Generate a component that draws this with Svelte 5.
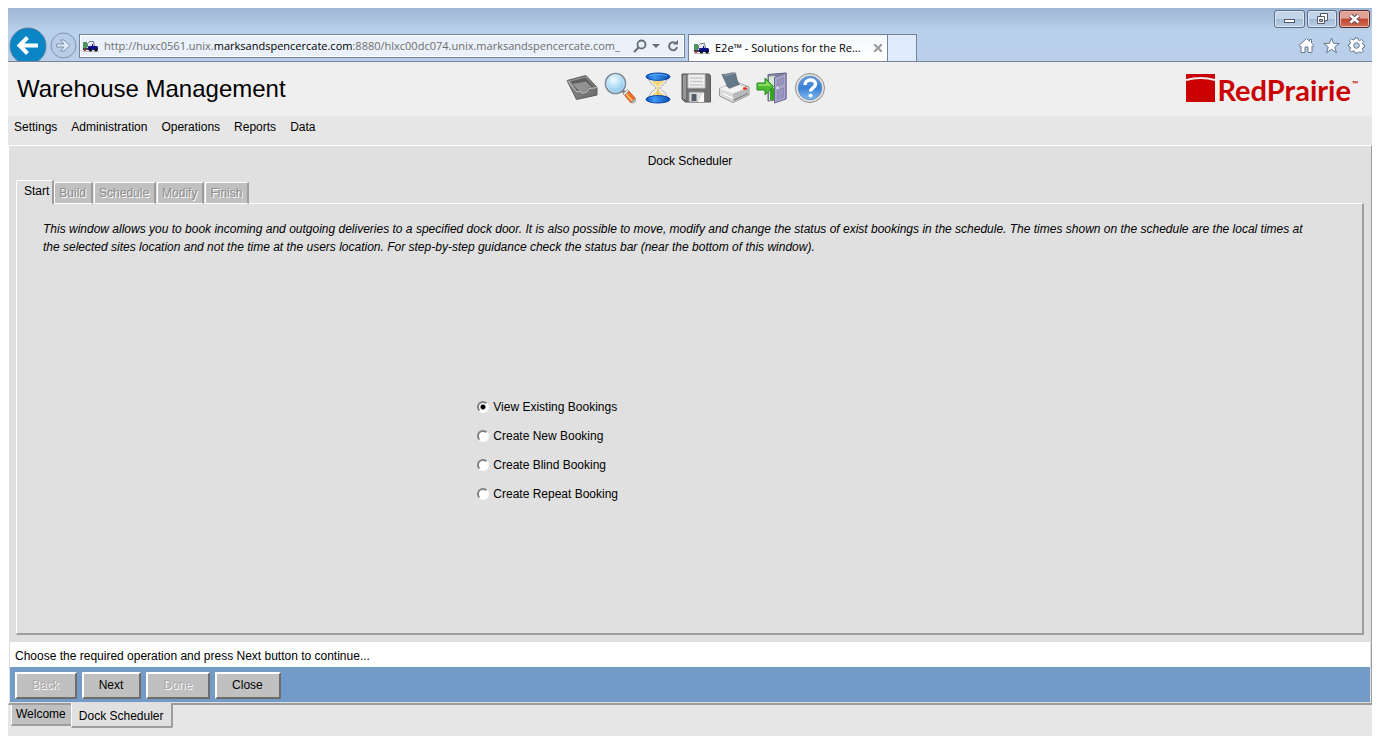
<script>
  const menus = ['Settings', 'Administration', 'Operations', 'Reports', 'Data'];
  const steps = ['Start', 'Build', 'Schedule', 'Modify', 'Finish'];
  const operations = [
    'View Existing Bookings',
    'Create New Booking',
    'Create Blind Booking',
    'Create Repeat Booking'
  ];
  let selected = $state('View Existing Bookings');
</script>

{#snippet truck()}
  <svg class="truck" viewBox="0 0 16 12" width="16" height="12" aria-hidden="true">
    <path d="M0 2h4v6H0z" fill="#4f9560" />
    <path d="M0 8h7v2H0z" fill="#3c3c50" />
    <path d="M0 11h16v1H0z" fill="#b9b9b9" />
    <path d="M4.500 7V3.500l2-2h4l1 4.500z" fill="#e8ecf4" stroke="#77778a" />
    <path d="M5 7l1-1h3V4h1v2h4l1 1v3H5z" fill="#10108a" />
    <circle cx="7.500" cy="10" r="1.600" fill="#111" />
    <circle cx="13" cy="10" r="1.600" fill="#111" />
    <path d="M1 9h2v2H1z" fill="#b03a3a" />
  </svg>
{/snippet}

<div class="window">
  <header class="chrome">
    <div class="nav">
      <button class="back" aria-label="Back">
        <svg viewBox="0 0 38 34" width="38" height="34">
          <circle cx="19" cy="19" r="18" fill="#0a86c6" stroke="#53819f" />
          <path d="M29 18.500H11M18.500 10.500l-8 8 8 8" fill="none" stroke="#fff" stroke-width="4" />
        </svg>
      </button>
      <button class="fwd" aria-label="Forward">
        <svg viewBox="0 0 27 27" width="27" height="27">
          <circle cx="13.500" cy="13.500" r="12.500" fill="#b7cce6" stroke="#7f93ac" />
          <path d="M6.500 12h7.500l-3.500-4h3.500l6 5.500-6 5.500h-3.500l3.500-4H6.500z" fill="#dce8f6" stroke="#8194ac" />
        </svg>
      </button>
    </div>
    <div class="address">
      {@render truck()}
      <a class="url" href="#top">http://huxc0561.unix.<b>marksandspencercate.com</b>:8880/hlxc00dc074.unix.marksandspencercate.com_</a>
      <button aria-label="Search">
        <svg viewBox="0 0 14 14" width="14" height="14"><circle cx="8.500" cy="5.500" r="4" fill="none" stroke="#666f78" stroke-width="1.800" /><path d="M5.500 8.500L1 13" stroke="#666f78" stroke-width="2" /></svg>
      </button>
      <button aria-label="Show address list">
        <svg viewBox="0 0 8 14" width="8" height="14"><path d="M0 5h8L4 9z" fill="#666f78" /></svg>
      </button>
      <button class="refresh" aria-label="Refresh">
        <svg viewBox="0 0 12 14" width="12" height="14"><path d="M9 4.500A4 4 0 1 0 10 8" fill="none" stroke="#666f78" stroke-width="2" /><path d="M6 5.500h5V1z" fill="#666f78" /></svg>
      </button>
    </div>
    <div class="browser-tab">
      {@render truck()}
      <span>E2e™ - Solutions for the Re...</span>
      <button aria-label="Close tab">
        <svg viewBox="0 0 8 8" width="8" height="8"><path d="M0 0l8 8M8 0L0 8" stroke="#999" stroke-width="2" /></svg>
      </button>
    </div>
    <button class="new-tab" aria-label="New tab"></button>
    <div class="right">
      <div class="sys">
        <button aria-label="Minimize">
          <svg viewBox="0 0 29 16" width="29" height="16"><rect x="9.500" y="8.500" width="10" height="3" fill="#fff" stroke="#535666" /></svg>
        </button>
        <button aria-label="Restore">
          <svg viewBox="0 0 28 16" width="28" height="16" fill="#fff" stroke="#535666"><path d="M12.500 2.500h7v7h-7z" /><path d="M9.500 5.500h7v7h-7z" /><path d="M11.500 8.500h3v2h-3z" fill="#a9bfd8" /></svg>
        </button>
        <button class="shut" aria-label="Close">
          <svg viewBox="0 0 29 16" width="29" height="16"><path d="M10.500 4.500l8 7M18.500 4.500l-8 7" stroke="#5f4652" stroke-width="4.500" /><path d="M10.500 4.500l8 7M18.500 4.500l-8 7" stroke="#fff" stroke-width="2.600" /></svg>
        </button>
      </div>
      <div class="tools">
        <button aria-label="Home">
          <svg viewBox="0 0 17 17" width="17" height="17"><path d="M8.500 1.500L1 8.500l1.200 1.200L3 9v6.500h4V10h3v5.500h4V9l.8.700L16 8.500l-2.500-2.400V2.500h-2v1.700z" fill="#fff" stroke="#66778e" /></svg>
        </button>
        <button aria-label="Favorites">
          <svg viewBox="0 0 17 17" width="17" height="17"><path d="M8.500 1l2 5.300 5.800.2-4.600 3.500 1.700 5.700-4.900-3.400-4.900 3.400L5.300 10 .7 6.500l5.800-.2z" fill="#fff" stroke="#66778e" /></svg>
        </button>
        <button aria-label="Tools">
          <svg viewBox="0 0 17 17" width="17" height="17">
            <path d="M7 1h3l.4 2 1.300.6 1.800-1.200 2.100 2.100-1.200 1.800.6 1.200 1.500.4v2.400l-1.700.5-.5 1.300 1.200 1.800-2.100 2.100-1.700-1.200-1.300.6L10 16H7l-.4-1.600-1.300-.6L3.500 15l-2.100-2.100 1.200-1.800-.6-1.300L.5 9.500V7.500l1.600-.6.5-1.200-1.200-1.800 2.100-2.100 1.800 1.200 1.300-.5z" fill="#fff" stroke="#66778e" />
            <circle cx="8.500" cy="8.500" r="2.800" fill="#bad0ea" stroke="#66778e" />
          </svg>
        </button>
      </div>
    </div>
  </header>

  <div class="banner">
    <h1>Warehouse Management</h1>
    <div class="toolbar">
      <button aria-label="Inbox">
        <svg viewBox="0 0 32 32" width="32" height="32">
          <defs><linearGradient id="tray" x2="1" y2="1"><stop stop-color="#999" /><stop offset="1" stop-color="#666" /></linearGradient></defs>
          <path d="M1 8.500L20 3.500l11 12v7.500L10.500 27.500z" fill="url(#tray)" stroke="#5c5c5c" />
          <path d="M4.500 9.500L19.500 5.700 27.500 15l-1.800 1-4-.2-2 3.500-4.500 1.200-2.500-1.800-1.500.5z" fill="#5e5e5e" />
          <path d="M6 12l14-2.500 6 6-4 .3-2 3.500-4.500 1.200-2.800-1.900z" fill="#929292" />
          <path d="M1.500 8.700L11 20l3.500-.7 1.500 2 5-1.300 1.800-3.500 8-.8" fill="none" stroke="#c4c4c4" />
        </svg>
      </button>
      <button aria-label="Search records">
        <svg viewBox="0 0 32 32" width="32" height="32">
          <defs><radialGradient id="lens" cx=".4" cy=".3" r=".8"><stop stop-color="#eefaff" /><stop offset=".6" stop-color="#a5d8f4" /><stop offset="1" stop-color="#6db3e2" /></radialGradient></defs>
          <path d="M18 18l4 4" stroke="#777" stroke-width="3" />
          <path d="M19.500 22l4.500-4 7.500 8.500-4.500 4.500z" fill="#ef6b22" stroke="#b64b19" stroke-width=".7" />
          <path d="M21.700 21.700l7 7.500" stroke="#ffc06a" stroke-width="1.800" />
          <path d="M19 21.500l4.500-4 1.500 1.500-4.500 4.500z" fill="#ddd" stroke="#888" stroke-width=".6" />
          <path d="M27 30.500l4-4 .7 2.500-2.200 2.200z" fill="#bbb" stroke="#777" stroke-width=".5" />
          <circle cx="11.500" cy="11.500" r="10" fill="url(#lens)" stroke="#7c8c99" stroke-width="1.600" />
          <circle cx="11.500" cy="11.500" r="8.800" fill="none" stroke="#d5e9f5" stroke-width=".8" />
        </svg>
      </button>
      <button aria-label="Wait">
        <svg viewBox="0 0 32 32" width="32" height="32">
          <defs><linearGradient id="cap"><stop stop-color="#0b57c4" /><stop offset=".35" stop-color="#3d9af5" /><stop offset="1" stop-color="#0b48ad" /></linearGradient></defs>
          <path d="M7 6c0 6 6 7.500 7 10-1 2.500-7 4-7 10h18c0-6-6-7.500-7-10 1-2.500 7-4 7-10z" fill="#f1f0e8" stroke="#aaa" />
          <path d="M10 9c2 3.500 5 4 6 7 1-3 4-3.500 6-7zM16 17c-1 4-6 4-7 9h14c-1-5-6-5-7-9z" fill="#f6d77c" />
          <path d="M16 15v8" stroke="#dcae3d" />
          <ellipse cx="16" cy="27.300" rx="12" ry="3.700" fill="url(#cap)" stroke="#0a48a8" />
          <ellipse cx="16" cy="4.700" rx="12" ry="3.700" fill="url(#cap)" stroke="#0a48a8" />
          <path d="M7 4c5-2 13-2 18 0" fill="none" stroke="#5cacf8" />
        </svg>
      </button>
      <button aria-label="Save">
        <svg viewBox="0 0 32 32" width="32" height="32">
          <path d="M2 2h27l1.500 1.500V30H5l-3-3z" fill="#707070" stroke="#585858" />
          <path d="M3 3h3v24H3z" fill="#999" />
          <path d="M8 2.500h17V16H8z" fill="#f0f0f0" stroke="#bbb" />
          <path d="M10 6h13M10 9.500h13M10 13h13" stroke="#c8c8c8" stroke-width="1.500" />
          <path d="M9 20h15v10H9z" fill="#dedede" stroke="#8c8c8c" />
          <path d="M11.500 22h5v7h-5z" fill="#4f5c68" />
          <path d="M18 30l5-9h1v9z" fill="#f8f8f8" />
        </svg>
      </button>
      <button aria-label="Print">
        <svg viewBox="0 0 32 32" width="32" height="32">
          <path d="M7 14L19 10l12 5-13 7z" fill="#f5f5f5" stroke="#aaa" />
          <path d="M4 2.500C9 3 13 0 17.500 1c1 5 2 9 4 12l-11 3.500C8 12 6.500 7 4 2.500z" fill="#65788a" stroke="#50606e" stroke-width=".7" />
          <path d="M6 3.500c4 0 7-2 11-2" stroke="#90a2b1" fill="none" />
          <path d="M1.500 16.500L8 14l3 3 10-3.500L31 15v8L15 30.500 1.500 24z" fill="#dcdcdc" stroke="#999" />
          <path d="M1.500 16.500L8 14l3.500 3L21 13l9.500 2.500L15 21.500z" fill="#f4f4f4" />
          <path d="M15 21.500V30l15.500-7v-7.500z" fill="#b9b9b9" />
          <path d="M3 22l11 5 3-1-12-5.500z" fill="#fff" stroke="#bbb" stroke-width=".5" />
          <ellipse cx="27" cy="16.500" rx="2.200" ry="1.300" fill="#e62b20" />
          <path d="M16 28l14-6.500" stroke="#777" />
        </svg>
      </button>
      <button aria-label="Exit">
        <svg viewBox="0 0 32 32" width="32" height="32">
          <path d="M12 2.500L30 1v26l-18 2z" fill="#8a88a8" stroke="#63617f" />
          <path d="M13 4.500l6-.5v24l-6 .5z" fill="#d9e8d6" />
          <path d="M14 14l5 3v10.500l-5 1z" fill="#35a51f" />
          <path d="M18.500 5.500L30 1v26l-11.500 4z" fill="#a6a4cb" stroke="#6a6890" />
          <path d="M21.500 8l6-2.500v6l-6 2zM21.500 18l6-2v9l-6 2.300z" fill="#9896c0" stroke="#817faa" stroke-width=".6" />
          <circle cx="21.500" cy="16" r="1.200" fill="#eee" />
          <path d="M1 11h8V6l8.500 8.500L9 23v-5H1z" fill="#4fbb35" stroke="#258a1f" />
          <path d="M2 12h8V8.500l5.500 5.500H2z" fill="#86dc62" />
        </svg>
      </button>
      <button aria-label="Help">
        <svg viewBox="0 0 32 32" width="32" height="32">
          <defs><linearGradient id="help" x2="0" y2="1"><stop stop-color="#5e9ee6" /><stop offset=".5" stop-color="#3b80d6" /><stop offset="1" stop-color="#7dbcf5" /></linearGradient></defs>
          <circle cx="16" cy="16" r="14.500" fill="#e4e4e4" stroke="#8d8d8d" />
          <circle cx="16" cy="16" r="11.800" fill="url(#help)" stroke="#6b8fb8" />
          <path d="M11 13c0-6.500 10.500-6.500 10.500-1 0 4-5 3.700-5 7.500" fill="none" stroke="#fff" stroke-width="3.400" />
          <circle cx="16.500" cy="23.500" r="2" fill="#fff" />
        </svg>
      </button>
    </div>
    <div class="logo">
      <svg viewBox="0 0 30 29" width="30" height="29" aria-hidden="true">
        <path d="M0 0h29v5Q15 1 0 5z" fill="#cb0000" />
        <path d="M0 7Q15 3 29 7v21H0z" fill="#cb0000" />
      </svg>
      <span>RedPrairie</span><sup>™</sup>
    </div>
  </div>

  <nav class="menu">
    {#each menus as item}<a href="#{item}">{item}</a>{/each}
  </nav>

  <main>
    <h2>Dock Scheduler</h2>
    <div class="steps" role="tablist">
      {#each steps as step, i}
        <button role="tab" class:current={i === 0} aria-selected={i === 0} disabled={i > 0}>{step}</button>
      {/each}
    </div>
    <section class="pane">
      <p>This window allows you to book incoming and outgoing deliveries to a specified dock door. It is also possible to move, modify and change the status of exist bookings in the schedule. The times shown on the schedule are the local times at the selected sites location and not the time at the users location. For step-by-step guidance check the status bar (near the bottom of this window).</p>
      <div class="choices">
        {#each operations as op}
          <label><input type="radio" name="operation" value={op} bind:group={selected} />{op}</label>
        {/each}
      </div>
    </section>
    <div class="status">Choose the required operation and press Next button to continue...</div>
    <div class="actions">
      <button disabled>Back</button>
      <button>Next</button>
      <button disabled>Done</button>
      <button>Close</button>
    </div>
  </main>

  <footer>
    <button>Welcome</button>
    <button class="current">Dock Scheduler</button>
  </footer>
</div>

<style>
  :global(body) { margin: 0; background: #fff; }
  * { box-sizing: border-box; }
  button {
    margin: 0;
    padding: 0;
    border: 0;
    background: none;
    color: inherit;
    font: inherit;
  }
  svg { display: block; flex: none; }

  .window {
    display: flex;
    flex-direction: column;
    min-height: calc(100vh - 16px);
    margin: 8px;
    background: #e6e6e6;
    color: #000;
    font: 12px/18px "Liberation Sans", Arial, sans-serif;
  }

  .chrome {
    display: flex;
    align-items: flex-end;
    height: 54px;
    border-bottom: 1px solid #73839a;
    background: linear-gradient(#9db6d3, #bad1eb 24px, #b9cee9);
    font: 11px/16px "Open Sans", "Noto Sans", sans-serif;
  }
  .nav {
    display: flex;
    align-items: center;
    gap: 3px;
    width: 71px;
    height: 34px;
    padding-left: 1px;
  }
  .nav .fwd { padding-top: 3px; }
  .address {
    display: flex;
    align-items: center;
    gap: 5px;
    width: 606px;
    min-width: 0;
    height: 24px;
    margin: 0 3px 3px 0;
    padding: 0 5px 0 3px;
    border: 1px solid #73839a;
    background: #eaf1fa;
    box-shadow: inset 0 0 0 1px #fff;
  }
  .address .refresh { padding-left: 2px; }
  .url {
    flex: 1;
    min-width: 0;
    color: #6d6d6d;
    text-decoration: none;
    white-space: nowrap;
  }
  .url b { color: #000; font-weight: 400; }
  .browser-tab {
    display: flex;
    align-items: center;
    gap: 5px;
    width: 200px;
    height: 27px;
    padding: 0 5px;
    border: 1px solid #73839a;
    border-bottom: 0;
    background: linear-gradient(#f4f8fc, #fff);
  }
  .browser-tab span { flex: 1; white-space: nowrap; }
  .new-tab {
    width: 29px;
    height: 27px;
    border: 1px solid #73839a;
    border-width: 1px 1px 0 0;
    background: #dfeafa;
  }
  .right {
    display: flex;
    flex-direction: column;
    align-items: flex-end;
    justify-content: space-between;
    align-self: stretch;
    margin-left: auto;
    padding: 2px 2px 7px 0;
  }
  .sys { display: flex; gap: 2px; }
  .sys button {
    border: 1px solid #5d6f87;
    border-radius: 3px;
    background: linear-gradient(#c3d5e9 50%, #a3bad4 50%, #b9cfe8);
    box-shadow: inset 0 0 0 1px #dbe7f3;
  }
  .sys .shut {
    border-color: #5b2a2a;
    background: linear-gradient(#dfa193 45%, #c0432d 50%, #d0705a);
    box-shadow: inset 0 0 0 1px #e8b9ae;
  }
  .tools { display: flex; gap: 8px; padding-right: 5px; }

  .banner {
    display: grid;
    grid-template-columns: 1fr auto 1fr;
    align-items: center;
    height: 54px;
    padding: 0 14px 2px 9px;
    background: #efefef;
  }
  h1 { margin: 0; padding-top: 2px; font: 24px/28px "Liberation Sans", Arial, sans-serif; }
  .toolbar { display: flex; gap: 6px; padding-left: 16px; }
  .logo {
    display: flex;
    align-items: center;
    justify-self: end;
    gap: 1px;
    color: #cb0000;
    font: 700 29px/32px Lato, sans-serif;
  }
  .logo span { padding-top: 4px; }
  .logo sup { align-self: flex-start; font-size: 8px; line-height: 28px; }

  .menu {
    display: flex;
    gap: 14px;
    height: 29px;
    padding: 2px 6px;
  }
  .menu a { color: #000; text-decoration: none; }

  main {
    display: flex;
    flex: 1;
    flex-direction: column;
    border: 1px solid #fff;
    border-right-color: #9d9d9d;
    border-bottom: 2px solid #9d9d9d;
    background: #e0e0e0;
  }
  h2 { margin: 6px 0 10px; font: inherit; text-align: center; }
  .steps {
    position: relative;
    display: flex;
    align-items: flex-end;
    gap: 1px;
    margin: 0 7px -1px;
  }
  .steps button {
    height: 22px;
    padding: 0 5px 1px 4px;
    border: 1px solid #fff;
    border-right: 2px solid #9d9d9d;
    border-top-left-radius: 2px;
    background: #c0c0c0;
  }
  .steps .current {
    height: 24px;
    margin-right: -1px;
    padding: 0 3px 3px 7px;
    border-bottom: 0;
    background: #e0e0e0;
  }
  button:disabled { color: #8c8c8c; text-shadow: 1px 1px #fff; }
  .pane {
    display: flex;
    flex: 1;
    flex-direction: column;
    margin: 0 7px 7px;
    border: 1px solid #fff;
    border-right: 2px solid #9d9d9d;
    border-bottom: 2px solid #9d9d9d;
  }
  .pane p { margin: 16px 48px 0 26px; font-style: italic; }
  .choices {
    display: flex;
    flex: 1;
    flex-direction: column;
    align-items: flex-start;
    justify-content: center;
    gap: 11px;
    margin-left: 34%;
    padding: 12px 0 0 3px;
  }
  label { display: flex; align-items: center; gap: 4px; }
  input {
    appearance: none;
    width: 12px;
    height: 12px;
    margin: 0;
    border: 2px solid;
    border-color: #808080 #fff #fff #808080;
    border-radius: 50%;
    background: #fff;
  }
  input:checked { background: radial-gradient(circle, #000 2px, #fff 3px); }
  .status { margin: 0 1px; padding: 5px 5px 2px; background: #fff; }
  .actions {
    display: flex;
    gap: 5px;
    margin: 0 1px 1px;
    padding: 5px 5px 3px;
    background: #739bc8;
  }
  .actions button {
    height: 27px;
    padding: 0 16px 1px 15px;
    border: 2px solid;
    border-color: #fff #6d6d6d #6d6d6d #fff;
    background: #c0c0c0;
  }
  .actions button:disabled { color: #a8a8a8; }

  footer { display: flex; align-items: flex-start; height: 31px; padding-left: 3px; }
  footer button {
    height: 21px;
    padding: 0 5px 2px 4px;
    border-bottom: 2px solid #9d9d9d;
    border-left: 1px solid #fff;
    background: #c0c0c0;
  }
  footer .current {
    height: 25px;
    margin-top: -2px;
    padding: 2px 7px 0 7px;
    border-right: 2px solid #9d9d9d;
    border-bottom-right-radius: 2px;
    background: #e0e0e0;
  }
</style>
